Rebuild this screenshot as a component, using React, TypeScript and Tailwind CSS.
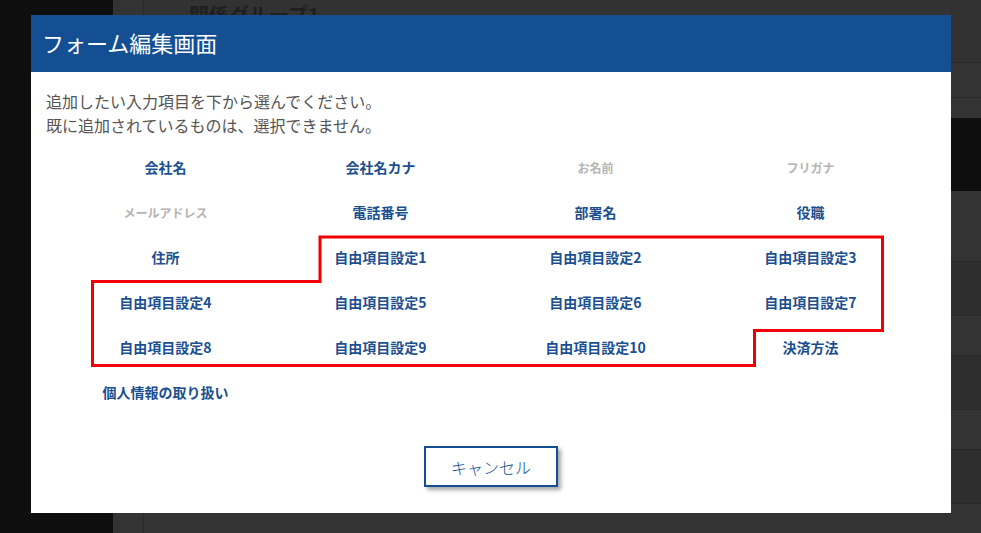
import React from "react";

type Item = { label: string; disabled?: boolean };

const items: Item[] = [
  { label: "会社名" },
  { label: "会社名カナ" },
  { label: "お名前", disabled: true },
  { label: "フリガナ", disabled: true },
  { label: "メールアドレス", disabled: true },
  { label: "電話番号" },
  { label: "部署名" },
  { label: "役職" },
  { label: "住所" },
  { label: "自由項目設定1" },
  { label: "自由項目設定2" },
  { label: "自由項目設定3" },
  { label: "自由項目設定4" },
  { label: "自由項目設定5" },
  { label: "自由項目設定6" },
  { label: "自由項目設定7" },
  { label: "自由項目設定8" },
  { label: "自由項目設定9" },
  { label: "自由項目設定10" },
  { label: "決済方法" },
  { label: "個人情報の取り扱い" },
];

const font = { fontFamily: '"Noto Sans CJK JP", "Noto Sans", sans-serif' };

export default function App() {
  return (
    <div
      className="relative w-[981px] h-[533px] overflow-hidden flex bg-[#0e0e0e]"
      style={font}
    >
      {/* sidebar */}
      <div className="w-[113px] h-full bg-[#0e0e0e]" />
      {/* main background */}
      <div className="flex-1 h-full flex bg-[#333333]">
        <div className="w-[30px] h-full bg-[#333333]" />
        <div className="flex-1 flex flex-col border-l border-[#2a2a2a]">
          <div className="h-[63px] border-b border-[#292929] bg-[#323232] pl-[45px] pt-[1px]">
            <span className="text-[20px] font-bold text-[#1f1f1f] leading-[28px]">
              関係グループ1
            </span>
          </div>
          <div className="h-[35px] border-b border-[#292929] bg-[#333333]" />
          <div className="h-[20px] bg-[#333333]" />
          <div className="h-[73px] bg-[#0e0e0e]" />
          <div className="h-[71px] border-b border-[#292929] bg-[#333333]" />
          <div className="h-[54px] border-b border-[#292929] bg-[#2e2e2e]" />
          <div className="h-[40px] border-b border-[#292929] bg-[#333333]" />
          <div className="h-[54px] border-b border-[#292929] bg-[#2e2e2e]" />
          <div className="h-[40px] border-b border-[#292929] bg-[#333333]" />
          <div className="h-[54px] border-b border-[#292929] bg-[#2e2e2e]" />
          <div className="flex-1 bg-[#333333]" />
        </div>
      </div>

      {/* modal */}
      <div className="absolute left-[31px] top-[15px] w-[920px] h-[498px] bg-white flex flex-col">
        <div className="h-[57px] bg-[#154f93] flex items-center pl-[11px] pb-[3px]">
          <h1 className="text-[22px] text-white font-normal leading-none">
            フォーム編集画面
          </h1>
        </div>
        <div className="pt-[17px] pl-[15px] text-[16px] leading-[24px] text-[#555555]">
          <p>追加したい入力項目を下から選んでください。</p>
          <p>既に追加されているものは、選択できません。</p>
        </div>
        <div className="mt-[8px] pl-[27px] pr-[33px] grid grid-cols-4">
          {items.map((it) => (
            <div
              key={it.label}
              className="h-[45px] flex items-center justify-center"
            >
              {it.disabled ? (
                <span className="text-[12px] font-bold text-[#b4b4b4]">
                  {it.label}
                </span>
              ) : (
                <span className="text-[14px] font-bold text-[#1b4f90]">
                  {it.label}
                </span>
              )}
            </div>
          ))}
        </div>
        <div className="mt-[31px] flex justify-center">
          <button className="w-[134px] h-[41px] border-2 border-[#154f93] bg-white text-[16px] font-light text-[#154f93] shadow-[3px_3px_4px_rgba(0,0,0,0.35)]">
            キャンセル
          </button>
        </div>
      </div>

      {/* red annotation outline */}
      <svg
        className="absolute left-0 top-0 pointer-events-none"
        width="981"
        height="533"
        viewBox="0 0 981 533"
      >
        <polygon
          points="320,281.5 320,237 882.5,237 882.5,330.5 754.5,330.5 754.5,365.5 92.5,365.5 92.5,281.5"
          fill="none"
          stroke="#f00000"
          strokeWidth="3"
        />
      </svg>
    </div>
  );
}
